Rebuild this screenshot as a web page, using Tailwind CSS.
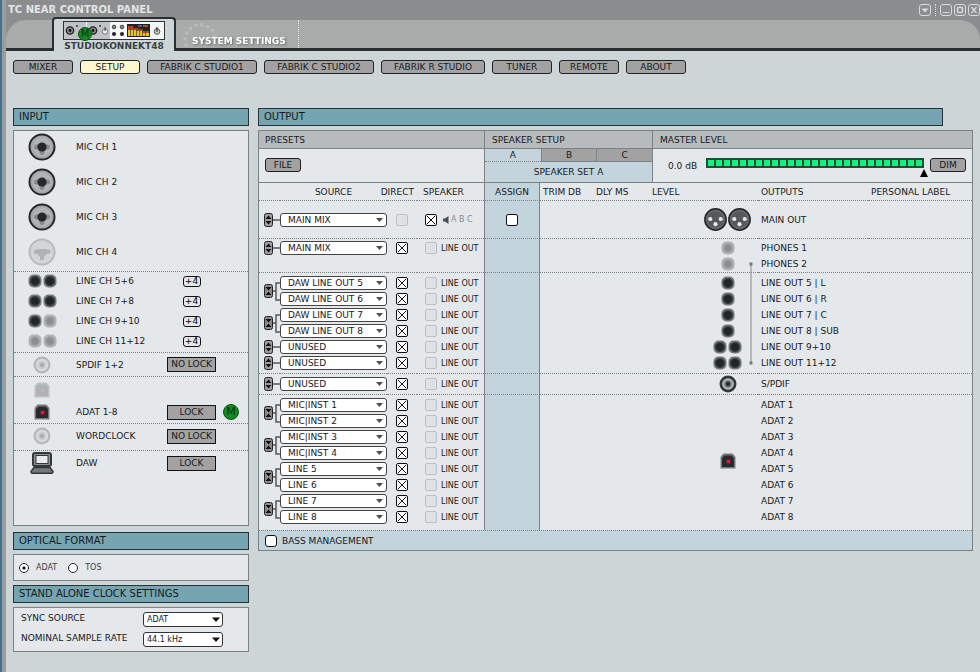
<!DOCTYPE html>
<html lang="en">
<head>
<meta charset="utf-8">
<title>TC Near Control Panel</title>
<script src="https://cdn.jsdelivr.net/npm/@tailwindcss/browser@4"></script>
</head>
<body class="min-h-screen flex bg-[#ced5d7] font-['DejaVu_Sans',Verdana,sans-serif] text-[9px] leading-3 text-[#16191b]">

<svg class="hidden">
  <symbol id="combo" viewBox="0 0 28 28">
    <circle cx="14" cy="14" r="12.500" fill="#a4a8a9" stroke="#24282a" stroke-width="2"/>
    <circle cx="14" cy="14" r="9.500" fill="#b0b4b5"/>
    <rect x="6" y="11.500" width="16" height="5" rx="2.500" fill="#85898a"/>
    <path d="M11.500 15h5v5l-1.500 2h-2l-1.500-2z" fill="#85898a"/>
    <circle cx="14" cy="14" r="4.600" fill="#24282a"/>
  </symbol>
  <symbol id="combo-off" viewBox="0 0 28 28">
    <circle cx="14" cy="14" r="12.500" fill="#d3d6d7" stroke="#b7babb" stroke-width="2"/>
    <rect x="5.500" y="11.500" width="17" height="4.500" rx="2.200" fill="#b0b3b4"/>
    <path d="M10 11h8v6l-2 1.500V22h-4v-3.500L10 17z" fill="#b0b3b4"/>
  </symbol>
  <symbol id="jack" viewBox="0 0 14 14">
    <rect x=".5" y=".5" width="13" height="13" rx="5" fill="#777b7d"/>
    <circle cx="7" cy="7" r="5.300" fill="#3b4042"/>
    <circle cx="7" cy="7" r="3.800" fill="#202527"/>
  </symbol>
  <symbol id="jack-off" viewBox="0 0 14 14">
    <rect x=".5" y=".5" width="13" height="13" rx="5" fill="#b0b3b4"/>
    <circle cx="7" cy="7" r="4.500" fill="#949798"/>
    <circle cx="7" cy="7" r="2.800" fill="#8b8e8f"/>
  </symbol>
  <symbol id="coax" viewBox="0 0 18 18">
    <circle cx="9" cy="9" r="8.500" fill="#34393b"/>
    <circle cx="9" cy="9" r="5.800" fill="#b9bbbb"/>
    <circle cx="9" cy="9" r="4" fill="#85898a"/>
    <circle cx="9" cy="9" r="2.400" fill="#2b3032"/>
  </symbol>
  <symbol id="coax-off" viewBox="0 0 18 18">
    <circle cx="9" cy="9" r="7.300" fill="#d9dcdd" stroke="#b4b7b8" stroke-width="2.200"/>
    <circle cx="9" cy="9" r="4.200" fill="#c9cccd"/>
    <circle cx="9" cy="9" r="2.200" fill="#aaadae"/>
  </symbol>
  <symbol id="optical" viewBox="0 0 16 16">
    <path d="M.5 15.500V4l3-3.500h9L15.500 4v11.500z" fill="#74787a"/>
    <path d="M2 14V5l2.500-2.500h7L14 5v9z" fill="#262b2d"/>
    <circle cx="8.500" cy="8.500" r="2.600" fill="#7a1a2c"/>
    <circle cx="8.500" cy="8.500" r="1.400" fill="#e0294c"/>
  </symbol>
  <symbol id="optical-off" viewBox="0 0 16 16">
    <path d="M.5 15.500V4l3-3.500h9L15.500 4v11.500z" fill="#bfc2c3"/>
    <path d="M2 14V5l2.500-2.500h7L14 5v9z" fill="#b0b3b4"/>
    <circle cx="8.500" cy="8.500" r="2" fill="#c4b4b8"/>
  </symbol>
  <symbol id="computer" viewBox="0 0 24 22">
    <rect x="3" y="1" width="18" height="13" rx="2" fill="#8d9192" stroke="#33383a" stroke-width="2"/>
    <rect x="6" y="3.500" width="12" height="8" fill="#e8ebed" stroke="#33383a"/>
    <path d="M4 15.500h16l3 4c0 1.300-.5 1.800-1.500 1.800h-19C1.500 21.300 1 20.800 1 19.500z" fill="#74787a" stroke="#33383a" stroke-width="1.500"/>
  </symbol>
  <symbol id="xlr" viewBox="0 0 22 22">
    <circle cx="11" cy="11" r="10.200" fill="#55595c" stroke="#24282a" stroke-width="1.500"/>
    <circle cx="11" cy="11" r="8.300" fill="none" stroke="#74787a" stroke-width=".8"/>
    <circle cx="6" cy="10.500" r="2" fill="#e6e9ea"/><circle cx="16" cy="10.500" r="2" fill="#e6e9ea"/><circle cx="11" cy="15.500" r="2" fill="#e6e9ea"/>
  </symbol>
  <symbol id="link-split" viewBox="0 0 9 14">
    <rect x=".5" y=".5" width="8" height="13" rx="2" fill="#9b9d9e" stroke="#222"/>
    <path d="M4.500 2.500L7.500 6h-6zM4.500 11.500L7.500 8h-6z" fill="#111"/>
  </symbol>
  <symbol id="link-joined" viewBox="0 0 9 14">
    <rect x=".5" y=".5" width="8" height="13" rx="2" fill="#8a8c8d" stroke="#222"/>
    <path d="M4.500 6.500L7.500 3h-6zM4.500 7.500L7.500 11h-6z" fill="#111"/>
  </symbol>
</svg>

<div class="w-[6px] shrink-0 border-l-2 border-[#3f7390] bg-[#9a9c9f]"></div>

<div class="flex-1 min-w-0 flex flex-col">
  <header class="bg-[#8b8d8e]">
    <div class="h-5 flex items-center pl-[2px]">
      <h1 class="flex-1 text-[10px] font-bold text-[#e3e5e6]">TC NEAR CONTROL PANEL</h1>
      <button aria-label="Menu" class="mr-[4px]"><svg class="block size-3" viewBox="0 0 12 12"><rect x=".5" y=".5" width="11" height="11" rx="2.500" fill="none" stroke="#d8dadb"/><path d="M2.500 4.500h7L6 8.500z" fill="#d8dadb"/></svg></button>
      <span class="h-3 border-l border-dotted border-[#d8dadb] mr-[4px]"></span>
      <button aria-label="Minimize" class="mr-[2px]"><svg class="block size-3" viewBox="0 0 12 12"><rect x=".5" y=".5" width="11" height="11" rx="2.500" fill="none" stroke="#d8dadb"/><path d="M2.500 8.500h7" stroke="#d8dadb"/></svg></button>
      <button aria-label="Maximize" class="mr-[2px]"><svg class="block size-3" viewBox="0 0 12 12"><rect x=".5" y=".5" width="11" height="11" rx="2.500" fill="none" stroke="#d8dadb"/><rect x="3.500" y="3.500" width="5" height="5" rx="1" fill="none" stroke="#d8dadb" stroke-width="1.500"/></svg></button>
      <button aria-label="Close"><svg class="block size-3" viewBox="0 0 12 12"><rect x=".5" y=".5" width="11" height="11" rx="2.500" fill="none" stroke="#d8dadb"/><path d="M3.500 3l5 6M8.500 3l-5 6" stroke="#d8dadb" stroke-width="1.300"/></svg></button>
    </div>
    <nav class="h-[31px] flex items-end rounded-t-[20px] bg-[#a9abab]">
      <div class="w-[46px] h-[31px] border-b-3 border-[#2a3032]"></div>
      <a href="#device" class="relative w-[124px] h-[34px] shrink-0 -mt-[3px] rounded-t-sm border-x-2 border-t-2 border-[#2a3032] bg-[#ced5d7] flex flex-col items-center pt-[2px]">
        <svg class="block shrink-0 w-[102px] h-[19px]" viewBox="0 0 102 19">
          <rect x=".5" y=".5" width="101" height="18" fill="#f5f6f6" stroke="#333"/>
          <rect x="1" y="1" width="46" height="17" fill="#bfc3c6"/>
          <path d="M23.500 1v17" stroke="#f5f6f6"/>
          <circle cx="7" cy="9.500" r="3.700" fill="#888" stroke="#222" stroke-width="1.300"/><circle cx="7" cy="9.500" r="1.400" fill="#111"/>
          <circle cx="30" cy="9.500" r="3.700" fill="#888" stroke="#222" stroke-width="1.300"/><circle cx="30" cy="9.500" r="1.400" fill="#111"/>
          <circle cx="14" cy="5" r="1" fill="#333"/><circle cx="37" cy="5" r="1" fill="#333"/>
          <circle cx="42" cy="10.500" r="2.700" fill="#eee" stroke="#777"/><path d="M42 6v4" stroke="#333"/>
          <g fill="#888" stroke="#444"><circle cx="51" cy="6" r="1.800"/><circle cx="59" cy="6" r="1.800"/></g>
          <circle cx="51" cy="13" r="2" fill="#222"/><circle cx="59" cy="13" r="2" fill="#222"/>
          <rect x="64" y="3" width="23" height="13" fill="#1f2422"/>
          <path d="M65 5h5v2h5v1h5v2h6v4H65z" fill="#c8402c"/>
          <path d="M65 9h8v1h6v2h7v3H65z" fill="#e3c52a"/>
          <path d="M67.500 5v10M70.500 5v10M73.500 6v9M76.500 7v8M79.500 8v7M82.500 9v6" stroke="#4d3f14" stroke-width=".7"/>
          <path d="M75 4h4v2h-4z" fill="#3f6a8c"/><path d="M80 4h5v2h-5z" fill="#b64c27"/>
          <circle cx="94" cy="10.500" r="2.800" fill="#ccc" stroke="#555"/><path d="M94 6v5" stroke="#222"/>
        </svg>
        <span class="absolute left-[24px] top-[8px] size-[14px] rounded-full border border-[#0c4f14] bg-[#138a22] text-center text-[10px] leading-3 text-[#06340c]">M</span>
        <span class="font-bold text-[#3a4043] leading-3 whitespace-nowrap">STUDIOKONNEKT48</span>
      </a>
      <div class="flex-1 h-[31px] border-b-3 border-[#2a3032] flex">
        <a href="#system" class="relative w-[123px] h-[28px] border-r border-dotted border-[#e3e5e6] pl-[16px] pt-[15px]">
          <svg class="absolute left-[6px] top-[3px] w-[36px] h-[24px]" viewBox="0 0 36 24"><path d="M4 22A15 15 0 1 1 33 15" fill="none" stroke="#b7b9b9" stroke-width="4" stroke-linecap="round" stroke-dasharray="0 6"/></svg>
          <span class="relative font-bold text-white whitespace-nowrap drop-shadow-[1px_1px_1px_#666]">SYSTEM SETTINGS</span>
        </a>
      </div>
    </nav>
  </header>

  <nav class="flex flex-wrap gap-[7px] pl-[7px] pt-[9px]">
    <button class="w-[60px] h-[14px] rounded-[3px] border border-[#222] bg-[#a2a2a3]">MIXER</button>
    <button class="w-[60px] h-[14px] rounded-[3px] border border-[#222] bg-[#fdf6cf]">SETUP</button>
    <button class="w-[110px] h-[14px] rounded-[3px] border border-[#222] bg-[#a2a2a3]">FABRIK C STUDIO1</button>
    <button class="w-[110px] h-[14px] rounded-[3px] border border-[#222] bg-[#a2a2a3]">FABRIK C STUDIO2</button>
    <button class="w-[104px] h-[14px] rounded-[3px] border border-[#222] bg-[#a2a2a3]">FABRIK R STUDIO</button>
    <button class="w-[60px] h-[14px] rounded-[3px] border border-[#222] bg-[#a2a2a3]">TUNER</button>
    <button class="w-[60px] h-[14px] rounded-[3px] border border-[#222] bg-[#a2a2a3]">REMOTE</button>
    <button class="w-[60px] h-[14px] rounded-[3px] border border-[#222] bg-[#a2a2a3]">ABOUT</button>
  </nav>

  <main class="flex items-start gap-[9px] pl-[7px] pr-[7px] pt-[34px]">
    <div class="w-[236px] shrink-0 flex flex-col gap-1">
      <h2 class="h-[18px] border border-[#25343c] bg-[#76a5b2] pl-[5px] text-[10px] leading-4">INPUT</h2>
      <section id="inputs" class="min-h-[396px] border border-[#7b8285] bg-[#e4e8eb] mb-[2px]"></section>

      <h2 class="h-[18px] border border-[#25343c] bg-[#76a5b2] pl-[5px] text-[10px] leading-4">OPTICAL FORMAT</h2>
      <section class="h-[27px] border border-[#7b8285] bg-[#e4e8eb] flex items-center pl-[5px] gap-[11px] text-[8px] text-[#3c4144]">
        <label class="flex items-center gap-[7px]"><input type="radio" name="optical" checked class="appearance-none size-[10px] rounded-full border border-[#222] bg-white checked:bg-[radial-gradient(#111_0_1px,#fff_2px)]">ADAT</label>
        <label class="flex items-center gap-[7px]"><input type="radio" name="optical" class="appearance-none size-[10px] rounded-full border border-[#222] bg-white checked:bg-[radial-gradient(#111_0_1px,#fff_2px)]">TOS</label>
      </section>

      <h2 class="h-[18px] border border-[#25343c] bg-[#76a5b2] pl-[5px] text-[10px] leading-4">STAND ALONE CLOCK SETTINGS</h2>
      <section class="h-[45px] border border-[#7b8285] bg-[#e4e8eb] pl-[7px] pt-1 grid grid-cols-[122px_80px] auto-rows-[15px] gap-y-[5px]">
        <label for="sync">SYNC SOURCE</label>
        <div class="grid items-center">
          <select id="sync" class="[grid-area:1/1] appearance-none w-full h-[15px] rounded-[3px] border border-[#333] bg-white pl-[3px] text-[8px] leading-3"><option>ADAT</option></select>
          <svg class="[grid-area:1/1] justify-self-end mr-[3px] w-[8px] h-[5px] pointer-events-none" viewBox="0 0 8 5"><path d="M0 .5h8L4 5z" fill="#111"/></svg>
        </div>
        <label for="rate">NOMINAL SAMPLE RATE</label>
        <div class="grid items-center">
          <select id="rate" class="[grid-area:1/1] appearance-none w-full h-[15px] rounded-[3px] border border-[#333] bg-white pl-[3px] text-[8px] leading-3"><option>44.1 kHz</option></select>
          <svg class="[grid-area:1/1] justify-self-end mr-[3px] w-[8px] h-[5px] pointer-events-none" viewBox="0 0 8 5"><path d="M0 .5h8L4 5z" fill="#111"/></svg>
        </div>
      </section>
    </div>

    <div class="flex-1 min-w-0 flex flex-col gap-1">
      <h2 class="mr-[30px] h-[18px] border border-[#25343c] bg-[#76a5b2] pl-[5px] text-[10px] leading-4">OUTPUT</h2>
      <section class="border border-[#7b8285] bg-[#e4e8eb]">
        <div class="grid grid-cols-[225px_169px_1fr] border-b border-[#7b8285]">
          <div>
            <h3 class="h-[18px] border-b border-[#7b8285] bg-[#b7bbbe] pl-[6px] leading-[18px]">PRESETS</h3>
            <div class="pl-[6px] pt-[9px]"><button class="block w-9 h-[14px] rounded-[3px] border border-[#222] bg-[#a2a2a3]">FILE</button></div>
          </div>
          <div class="border-x border-[#7b8285] bg-[#c4d4dc]">
            <h3 class="h-[18px] border-b border-[#7b8285] bg-[#b7bbbe] pl-[7px] leading-[18px]">SPEAKER SETUP</h3>
            <div class="grid grid-cols-3 h-3 leading-3">
              <button class="border-b border-dotted border-[#7b8285]">A</button>
              <button class="border-b border-l border-[#7b8285] bg-[#a2a2a3]">B</button>
              <button class="border-b border-l border-[#7b8285] bg-[#a2a2a3]">C</button>
            </div>
            <div class="h-[21px] leading-[22px] text-center">SPEAKER SET A</div>
          </div>
          <div>
            <h3 class="h-[18px] border-b border-[#7b8285] bg-[#b7bbbe] pl-[7px] leading-[18px]">MASTER LEVEL</h3>
            <div class="h-[33px] flex items-start pl-[15px] pr-[6px] pt-[9px]">
              <span class="w-[38px] leading-4">0.0 dB</span>
              <div class="relative flex-1">
                <div id="meter" class="h-[10px] flex gap-[2px] border-2 border-[#1f4d3a] bg-[#1f4d3a]"></div>
                <svg class="absolute -right-[4px] top-[11px] w-[8px] h-[8px]" viewBox="0 0 8 8"><path d="M4 0l4 8H0z" fill="#000"/></svg>
                <input type="range" min="-60" max="0" value="0" aria-label="Master level" class="absolute inset-0 w-full opacity-0">
              </div>
              <button class="ml-[6px] w-9 h-[14px] rounded-[3px] border border-[#222] bg-[#a2a2a3]">DIM</button>
            </div>
          </div>
        </div>

        <table class="w-full table-fixed border-separate border-spacing-0">
          <colgroup>
            <col class="w-[21px]"><col class="w-[107px]"><col class="w-[30px]"><col class="w-[67px]"><col class="w-[56px]"><col class="w-[53px]"><col class="w-[56px]"><col class="w-[54px]"><col class="w-[55px]"><col class="w-[110px]"><col>
          </colgroup>
          <thead>
            <tr class="h-[17px]">
              <th class="p-0"></th>
              <th class="p-0 font-normal">SOURCE</th>
              <th class="p-0 font-normal"><div class="flex justify-end pr-[3px]">DIRECT</div></th>
              <th class="p-0 font-normal text-left pl-[6px]">SPEAKER</th>
              <th class="p-0 font-normal border-x border-[#7b8285] bg-[#c4d4dc]">ASSIGN</th>
              <th class="p-0 font-normal text-left pl-[3px]">TRIM DB</th>
              <th class="p-0 font-normal text-left pl-[3px]">DLY MS</th>
              <th class="p-0 font-normal text-left pl-[3px]">LEVEL</th>
              <th class="p-0"></th>
              <th class="p-0 font-normal text-left pl-[3px]">OUTPUTS</th>
              <th class="p-0 font-normal text-left pl-[3px]">PERSONAL LABEL</th>
            </tr>
          </thead>
          <tbody id="routing"></tbody>
        </table>

        <label class="h-5 flex items-center gap-[5px] border-t border-dotted border-[#7b8285] bg-[#c4d4dc] pl-[6px]">
          <input type="checkbox" class="appearance-none size-3 rounded-[3px] border border-[#111] bg-white">BASS MANAGEMENT
        </label>
      </section>
    </div>
  </main>
</div>

<script>
const sizes = {
  'combo': 'size-7', 'combo-off': 'size-7', 'jack': 'size-[14px]', 'jack-off': 'size-[14px]',
  'coax': 'size-[18px]', 'coax-off': 'size-[18px]', 'optical': 'size-4', 'optical-off': 'size-4',
  'computer': 'w-6 h-[22px]', 'xlr': 'size-[23px]'
};
const icon = n => `<svg class="shrink-0 ${sizes[n]}"><use href="#${n}"/></svg>`;

/* Input list: groups of rows [icons, label, status, clock master] */
const inputs = [
  { cls: 'grid gap-[3px] pb-[3px] border-b border-dotted border-[#7b8285]', row: 'h-8', rows: [
    [['combo'], 'MIC CH 1'], [['combo'], 'MIC CH 2'], [['combo'], 'MIC CH 3'], [['combo-off'], 'MIC CH 4']] },
  { cls: 'grid gap-[2px] pb-[2px] border-b border-dotted border-[#7b8285]', row: 'h-[18px]', rows: [
    [['jack', 'jack'], 'LINE CH 5+6', '+4'], [['jack', 'jack'], 'LINE CH 7+8', '+4'],
    [['jack', 'jack-off'], 'LINE CH 9+10', '+4'], [['jack-off', 'jack-off'], 'LINE CH 11+12', '+4']] },
  { cls: 'border-b border-dotted border-[#7b8285]', row: 'h-[23px]', rows: [[['coax-off'], 'SPDIF 1+2', 'NO LOCK']] },
  { cls: 'grid gap-1 pt-1 pb-[2px] border-b border-dotted border-[#7b8285]', row: 'h-[18px]', rows: [
    [['optical-off'], ''], [['optical'], 'ADAT 1-8', 'LOCK', true]] },
  { cls: 'pb-[2px] border-b border-dotted border-[#7b8285]', row: 'h-6', rows: [[['coax-off'], 'WORDCLOCK', 'NO LOCK']] },
  { cls: '', row: 'h-6', rows: [[['computer'], 'DAW', 'LOCK']] }
];
const status = s => !s ? '<span></span>'
  : s === '+4' ? '<button class="justify-self-center w-[18px] h-[11px] rounded-[3px] border border-[#111] text-[9px] leading-[9px] text-black">+4</button>'
  : `<span class="h-[15px] border border-[#111] bg-[#a2a2a3] text-center leading-[13px] whitespace-nowrap">${s}</span>`;
document.getElementById('inputs').innerHTML = inputs.map(g => `<div class="${g.cls}">` + g.rows.map(r =>
  `<div class="${g.row} grid grid-cols-[56px_97px_49px_1fr] items-center">
    <span class="flex justify-center items-center gap-px">${r[0].map(icon).join('')}</span>
    <span class="pl-[6px]">${r[1]}</span>${status(r[2])}
    ${r[3] ? '<span class="ml-[7px] size-4 rounded-full border border-[#0c4f14] bg-[#138a22] text-center text-[11px] leading-[14px] text-[#06340c]">M</span>' : ''}
  </div>`).join('') + '</div>').join('');

document.getElementById('meter').innerHTML = '<span class="flex-1 bg-[#18f07c]"></span>'.repeat(27);

/* Output routing: [source, icons, output label, link state] */
const one = 'single', two = 'pair';
const routing = [
  [['MAIN MIX', ['xlr', 'xlr'], 'MAIN OUT', one]],
  [['MAIN MIX', ['jack-off'], 'PHONES 1', one], [null, ['jack-off'], 'PHONES 2', null]],
  [['DAW LINE OUT 5', ['jack'], 'LINE OUT 5 | L', two], ['DAW LINE OUT 6', ['jack'], 'LINE OUT 6 | R'],
   ['DAW LINE OUT 7', ['jack'], 'LINE OUT 7 | C', two], ['DAW LINE OUT 8', ['jack'], 'LINE OUT 8 | SUB'],
   ['UNUSED', ['jack', 'jack'], 'LINE OUT 9+10', one], ['UNUSED', ['jack', 'jack'], 'LINE OUT 11+12', one]],
  [['UNUSED', ['coax'], 'S/PDIF', one]],
  [['MIC|INST 1', ['optical'], 'ADAT 1', two], ['MIC|INST 2', null, 'ADAT 2'],
   ['MIC|INST 3', null, 'ADAT 3', two], ['MIC|INST 4', null, 'ADAT 4'],
   ['LINE 5', null, 'ADAT 5', two], ['LINE 6', null, 'ADAT 6'],
   ['LINE 7', null, 'ADAT 7', two], ['LINE 8', null, 'ADAT 8']]
];
const box = (label, on, dim) => `<span class="inline-grid size-3 shrink-0">
  <input type="checkbox" aria-label="${label}" ${on ? 'checked' : ''} class="peer [grid-area:1/1] appearance-none size-3 rounded-[2px] border ${dim ? 'border-[#bcc0c2] bg-[#dfe2e4]' : 'border-[#111] bg-white'}">
  <svg class="[grid-area:1/1] hidden peer-checked:block size-3 pointer-events-none" viewBox="0 0 12 12"><path d="M2 2l8 8M10 2l-8 8" stroke="#111"/></svg></span>`;
const linkCell = kind => kind === one
  ? `<div class="h-4 flex items-center pl-[5px]"><button aria-label="Link channels"><svg class="block w-[9px] h-[14px]"><use href="#link-split"/></svg></button><span class="w-[7px] h-[2px] bg-[#7b7f81]"></span></div>`
  : `<div class="h-8 flex items-center pl-[5px]"><button aria-label="Unlink channels"><svg class="block w-[9px] h-[14px]"><use href="#link-joined"/></svg></button><svg class="w-[7px] h-8" viewBox="0 0 7 32"><path d="M0 16h3M7 8H3v17h4" fill="none" stroke="#55595b" stroke-width="1.500"/></svg></div>`;

let html = '';
routing.forEach((group, gi) => group.forEach((r, i) => {
  const first = i === 0, last = i === group.length - 1, main = gi === 0, phones = gi === 1, adat = gi === 4;
  const top = first ? 'border-t border-t-[#7b8285] [border-top-style:dotted] ' + (phones ? 'pt-px ' : 'pt-[2px] ') : 'pt-0 ';
  const edge = top + (last ? (adat ? 'pb-[5px] ' : phones ? 'pb-0 ' : 'pb-[2px] ') : 'pb-0 ');
  const td = (extra, body) => `<td class="px-0 ${edge}${extra}">${body}</td>`;
  let c = '';
  if (r[3] === one) c += td('', linkCell(one));
  else if (r[3] === two) c += `<td rowspan="2" class="px-0 ${top}pb-0 align-top">${linkCell(two)}</td>`;
  else if (r[3] === null) c += td('', '');
  c += td('', r[0] ? `<div class="h-4 grid items-center">
      <select aria-label="Source for ${r[2]}" class="[grid-area:1/1] appearance-none w-full h-[14px] rounded-[3px] border border-[#444] bg-white pl-[7px] text-[9px] leading-3"><option>${r[0]}</option></select>
      <svg class="[grid-area:1/1] justify-self-end mr-[4px] w-[7px] h-[4px] pointer-events-none" viewBox="0 0 7 4"><path d="M0 0h7L3.500 4z" fill="#4a4e50"/></svg></div>` : '');
  c += td('', r[0] ? `<div class="h-4 flex items-center justify-center">${box('Direct ' + r[2], !main, main)}</div>` : '');
  c += td('', r[0] ? `<div class="h-4 flex items-center pl-[8px] gap-1 whitespace-nowrap text-[8px] leading-4">${box('Speaker ' + r[2], main, !main)}${main
      ? '<span class="flex items-center gap-[2px] pl-[2px] text-[#85898b]"><svg class="w-[6px] h-[8px]" viewBox="0 0 6 8"><path d="M0 2.500h2L5.500 0v8L2 5.500H0z" fill="#4a4e50"/></svg>A B C</span>'
      : '<span class="pt-px">LINE OUT</span>'}</div>` : '');
  c += td('border-x border-x-[#7b8285] bg-[#c4d4dc]', main ? `<div class="h-4 flex items-center justify-center">${box('Assign', false, false)}</div>` : '');
  c += td('', '') + td('', '') + td('', '');
  if (adat && first) c += `<td rowspan="8" class="px-0 border-t border-t-[#7b8285] [border-top-style:dotted] pt-[2px] pb-[5px]"><div class="flex justify-center pr-[6px]">${icon('optical')}</div></td>`;
  else if (!adat) c += td('', `<div class="relative h-4 flex items-center justify-center gap-px pr-[6px]">${r[1].map(icon).join('')}${
      r[3] === null ? '<svg class="absolute right-[5px] top-[6px] w-[4px] h-[103px]" viewBox="0 0 4 103"><path d="M2 2v99" stroke="#85898b"/><path d="M.5 .5h3v3h-3zM.5 99.500h3v3h-3z" fill="#74787a"/></svg>' : ''}</div>`);
  c += td('', `<div class="h-4 leading-4 pl-[3px] whitespace-nowrap">${r[2]}</div>`);
  c += td('', '');
  html += `<tr class="${main ? 'h-[38px]' : ''}">${c}</tr>`;
}));
document.getElementById('routing').innerHTML = html;
</script>
</body>
</html>
